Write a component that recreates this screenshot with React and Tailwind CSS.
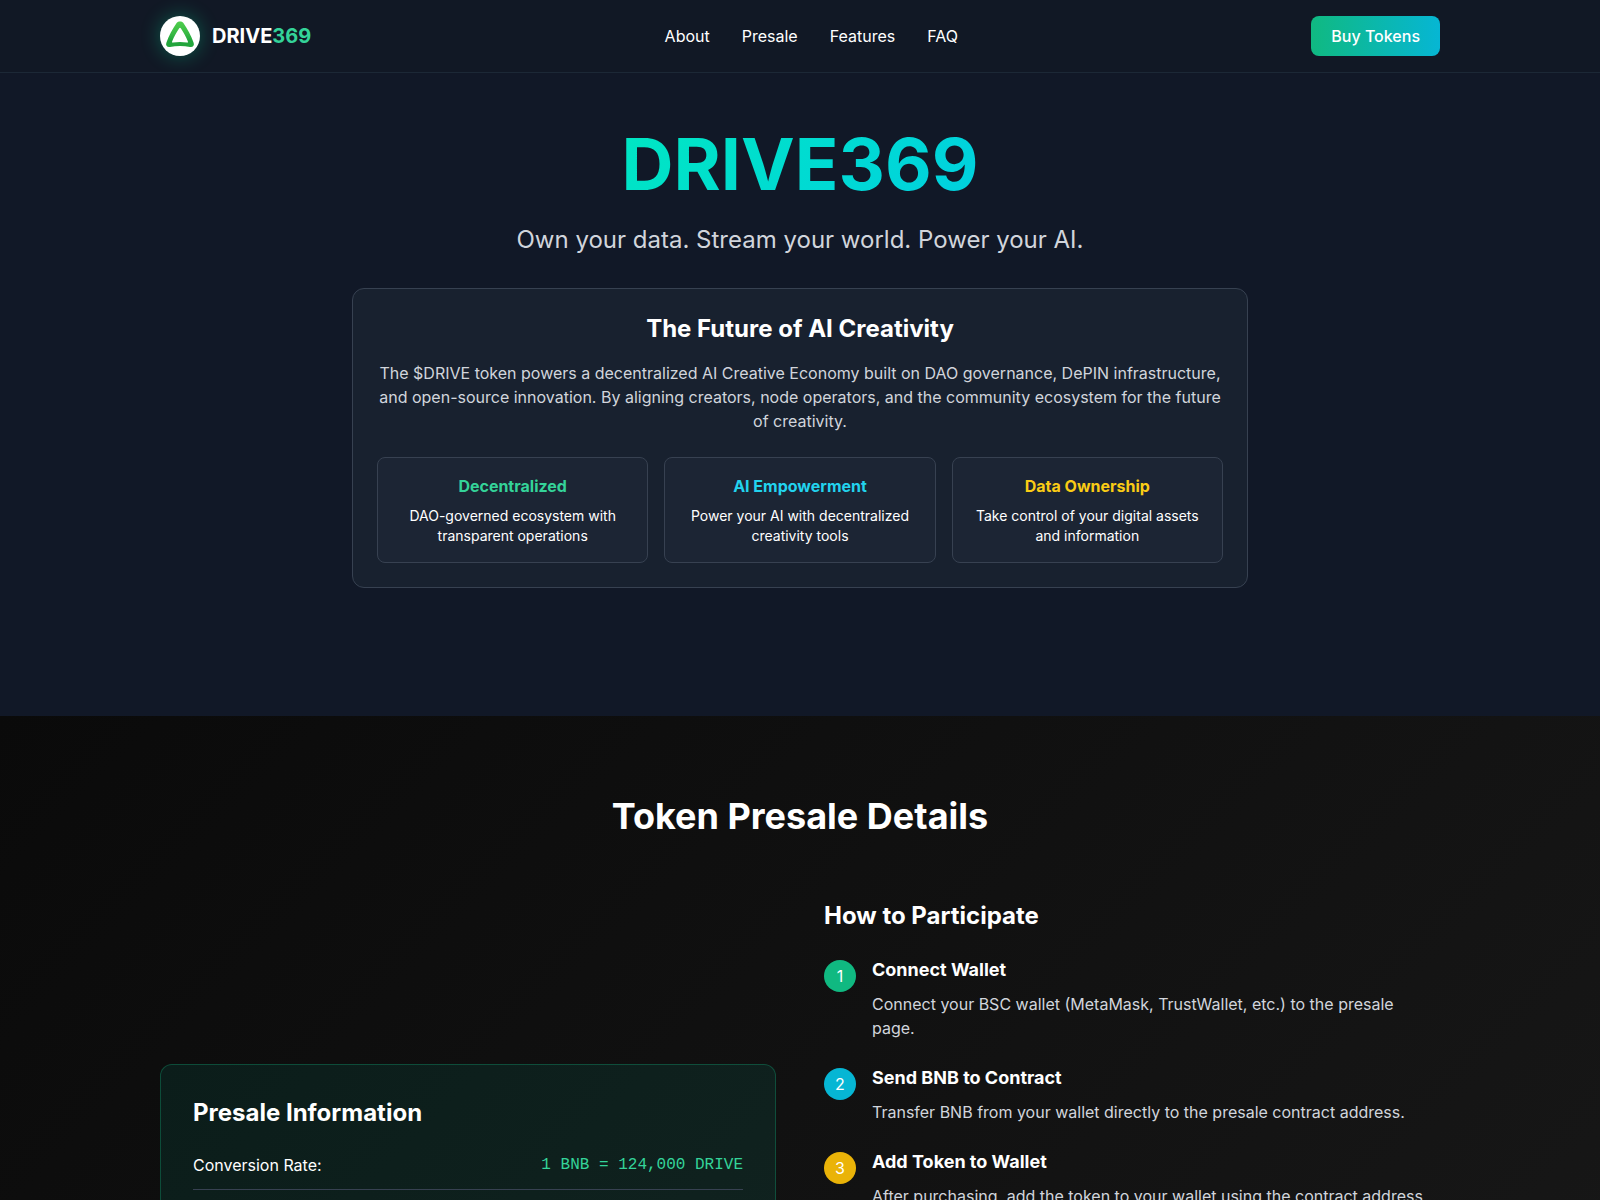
import React from 'react'

const NAV_LINKS = ['About', 'Presale', 'Features', 'FAQ']

const PILLARS = [
  { title: 'Decentralized', color: 'text-[#34d399]', text: 'DAO-governed ecosystem with transparent operations' },
  { title: 'AI Empowerment', color: 'text-[#22d3ee]', text: 'Power your AI with decentralized creativity tools' },
  { title: 'Data Ownership', color: 'text-[#facc15]', text: 'Take control of your digital assets and information' },
]

const PRESALE_ROWS = [{ label: 'Conversion Rate:', value: '1 BNB = 124,000 DRIVE' }]

const STEPS = [
  { title: 'Connect Wallet', color: 'bg-[#10b981]', text: 'Connect your BSC wallet (MetaMask, TrustWallet, etc.) to the presale page.' },
  { title: 'Send BNB to Contract', color: 'bg-[#06b6d4]', text: 'Transfer BNB from your wallet directly to the presale contract address.' },
  { title: 'Add Token to Wallet', color: 'bg-[#eab308]', text: 'After purchasing, add the token to your wallet using the contract address.' },
]

function Logo() {
  return (
    <svg className="w-10 h-10 rounded-full bg-white shadow-[0_0_20px_rgba(0,255,170,0.3)]" viewBox="0 0 40 40" fill="none">
      <defs>
        <linearGradient id="logo-green" x1="20" y1="5" x2="20" y2="31" gradientUnits="userSpaceOnUse">
          <stop stopColor="#4fcf4c" />
          <stop offset="0.5" stopColor="#38b844" />
          <stop offset="0.75" stopColor="#22a53c" />
          <stop offset="1" stopColor="#22a53c" />
        </linearGradient>
      </defs>
      {/* Rounded triangle with a hollow centre */}
      <path
        fill="url(#logo-green)"
        fillRule="evenodd"
        d="M16.8 6.8 C18.2 4.9 21.8 4.9 23.2 6.8 C27.4 12.6 31.4 20.2 33.7 27 C34.6 29.6 32.8 31.4 30 30.9 C23.6 29.7 16.4 29.7 10 30.9 C7.2 31.4 5.4 29.6 6.3 27 C8.6 20.2 12.6 12.6 16.8 6.8 Z M19.2 12.2 C16.4 16.4 13.9 20.8 12.2 25.2 C11.8 26.2 12.2 26.8 13.2 26.6 C17.6 25.8 22.4 25.8 26.8 26.6 C27.8 26.8 28.2 26.2 27.8 25.2 C26.1 20.8 23.6 16.4 20.8 12.2 C20.3 11.5 19.7 11.5 19.2 12.2 Z"
      />
    </svg>
  )
}

function Header() {
  return (
    <header className="sticky top-0 z-50 bg-[#111825] border-b border-[#1c2836]">
      <div className="max-w-7xl mx-auto py-4 flex items-center justify-between">
        <a href="#top" className="flex items-center gap-3">
          <Logo />
          <span className="text-xl font-bold">
            DRIVE<span className="text-[#34d399]">369</span>
          </span>
        </a>

        <nav className="flex gap-8">
          {NAV_LINKS.map(link => (
            <a key={link} href={`#${link.toLowerCase()}`} className="hover:text-[#34d399] transition-colors">
              {link}
            </a>
          ))}
        </nav>

        <button className="px-5 py-2 rounded-lg font-medium bg-linear-to-r/srgb from-[#10b981] to-[#06b6d4]">
          Buy Tokens
        </button>
      </div>
    </header>
  )
}

function Hero() {
  return (
    <section id="about" className="pt-[55px] pb-32 text-center">
      <div className="max-w-7xl mx-auto">
        <h1 className="text-7xl font-bold mb-6 bg-[linear-gradient(135deg,#00ffa3,#00b8ff)] bg-clip-text text-transparent">
          DRIVE369
        </h1>
        <p className="text-2xl text-gray-300 mb-8">Own your data. Stream your world. Power your AI.</p>

        <div className="max-w-4xl mx-auto p-6 rounded-xl border border-[#374151] bg-[#18212f]">
          <h2 className="text-2xl font-bold mb-4">The Future of AI Creativity</h2>
          <p className="text-gray-300 mb-6">
            The $DRIVE token powers a decentralized AI Creative Economy built on DAO governance, DePIN infrastructure,
            and open-source innovation. By aligning creators, node operators, and the community ecosystem for the future
            of creativity.
          </p>
          <div className="grid grid-cols-3 gap-4">
            {PILLARS.map(pillar => (
              <div key={pillar.title} className="p-4 rounded-lg border border-[#374151] bg-[#1c2534]">
                <h3 className={`font-bold mb-2 ${pillar.color}`}>{pillar.title}</h3>
                <p className="text-sm">{pillar.text}</p>
              </div>
            ))}
          </div>
        </div>
      </div>
    </section>
  )
}

function Presale() {
  return (
    <section id="presale" className="min-h-[1092px] py-20 bg-[linear-gradient(135deg,#0a0a0a,#1a1a1a)]">
      <div className="max-w-7xl mx-auto">
        <h2 className="text-4xl font-bold text-center mb-16">Token Presale Details</h2>

        <div className="grid grid-cols-2 gap-12 items-start">
          {/* Rates card */}
          <div className="mt-41 p-8 rounded-xl border border-[#10b981]/30 bg-[#00b496]/10">
            <h3 className="text-2xl font-bold mb-6">Presale Information</h3>
            {PRESALE_ROWS.map(row => (
              <div key={row.label} className="flex justify-between pb-3 border-b border-[#374151]">
                <span>{row.label}</span>
                <span className="font-['Liberation_Mono',monospace] text-[#34d399]">{row.value}</span>
              </div>
            ))}
          </div>

          {/* Steps */}
          <div>
            <h3 className="text-2xl font-bold mb-6">How to Participate</h3>
            <ol className="space-y-6">
              {STEPS.map((step, i) => (
                <li key={step.title} className="flex gap-4">
                  <span className={`w-8 h-8 mt-1 rounded-full shrink-0 flex items-center justify-center ${step.color}`}>
                    {i + 1}
                  </span>
                  <div>
                    <h4 className="text-lg font-bold mb-2">{step.title}</h4>
                    <p className="text-gray-300">{step.text}</p>
                  </div>
                </li>
              ))}
            </ol>
          </div>
        </div>
      </div>
    </section>
  )
}

export default function App() {
  return (
    <div id="top" className="bg-[#111827] text-white font-['Inter',sans-serif]">
      <Header />
      <main>
        <Hero />
        <Presale />
      </main>
    </div>
  )
}
